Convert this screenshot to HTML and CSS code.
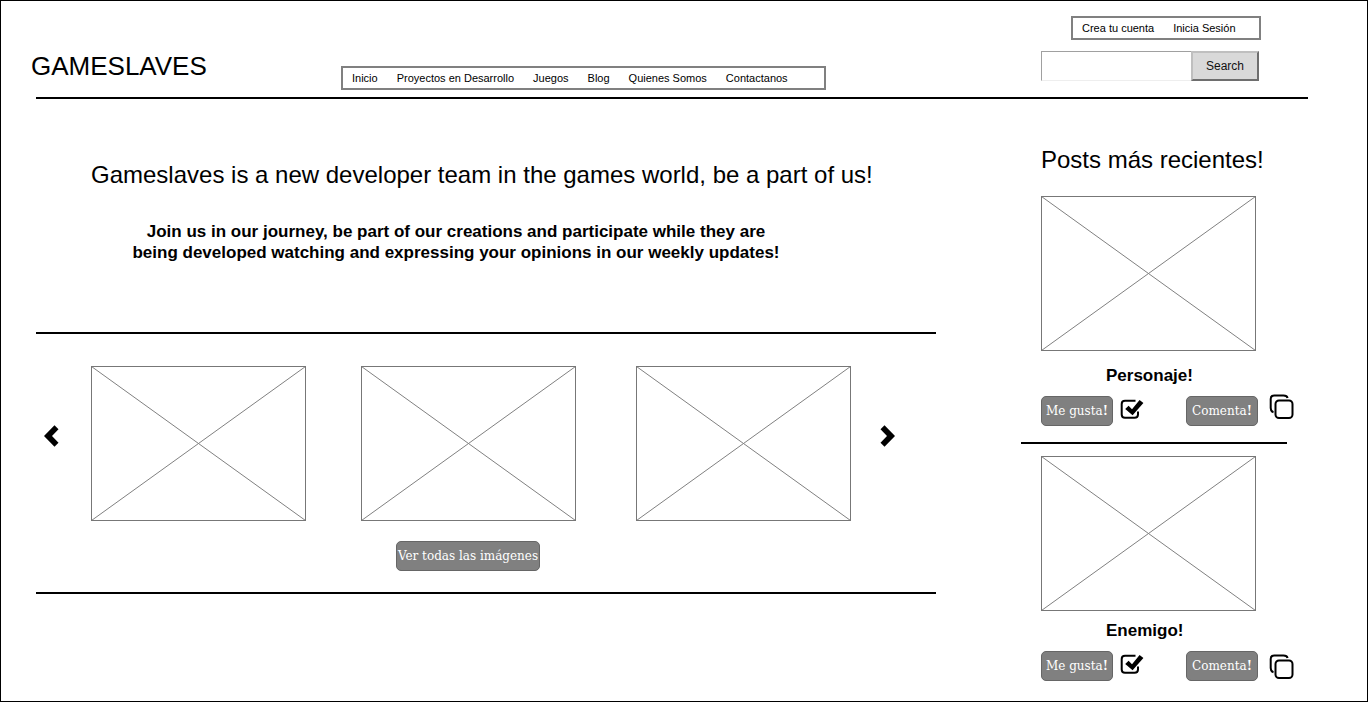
FILE: index.html
```html
<!DOCTYPE html>
<html lang="es">
<head>
<meta charset="utf-8">
<title>Gameslaves</title>
<meta name="viewport" content="width=device-width, initial-scale=1">
<link rel="stylesheet" href="styles.css">
</head>
<body>
<svg class="sprite" aria-hidden="true">
  <symbol id="placeholder" viewBox="0 0 215 155">
    <path d="M0.5 0.5L214.5 154.5M214.5 0.5L0.5 154.5" fill="none" stroke="#808080"/>
    <rect x="0.5" y="0.5" width="214" height="154" fill="none" stroke="#777"/>
  </symbol>
  <symbol id="check" viewBox="0 0 24 20">
    <path d="M15.500 1.700H5Q1.700 1.700 1.700 5V15.500Q1.700 18.700 5 18.700H14.500Q18 18.700 18 15.500V12.500" fill="none" stroke="#000" stroke-width="2"/>
    <path d="M5.200 10L8.600 6.800L12 10.300L19.600 1L23.400 4L12.600 16.200Z" fill="#000"/>
  </symbol>
  <symbol id="copy" viewBox="0 0 26 26">
    <path d="M4.500 18.200Q1.700 17.500 1.700 14V5Q1.700 1.500 5.200 1.500H14.500Q18 1.500 18.600 4" fill="none" stroke="#000" stroke-width="2"/>
    <rect x="6.500" y="6.500" width="17" height="17.500" rx="3.500" fill="#fff" stroke="#000" stroke-width="2"/>
  </symbol>
</svg>
<header class="header">
  <div class="logo">GAMESLAVES</div>
  <nav class="menu menu-main" aria-label="Principal">
    <a href="#">Inicio</a>
    <a href="#">Proyectos en Desarrollo</a>
    <a href="#">Juegos</a>
    <a href="#">Blog</a>
    <a href="#">Quienes Somos</a>
    <a href="#">Contactanos</a>
  </nav>
  <div class="tools">
    <nav class="menu menu-account" aria-label="Cuenta">
      <a href="#">Crea tu cuenta</a>
      <a href="#">Inicia Sesión</a>
    </nav>
    <form class="search">
      <input class="search-box" type="text" aria-label="Search">
      <button class="search-button" type="button">Search</button>
    </form>
  </div>
</header>
<hr class="rule rule-header">
<div class="columns">
  <main>
    <section class="intro">
      <h1>Gameslaves is a new developer team in the games world, be a part of us!</h1>
      <p>Join us in our journey, be part of our creations and participate while they are<br>being developed watching and expressing your opinions in our weekly updates!</p>
    </section>
    <hr class="rule">
    <section class="gallery">
      <div class="carousel">
        <button class="arrow" type="button" aria-label="Anterior"><svg width="15" height="22" viewBox="0 0 15 22"><path d="M0 11L10.500 0.300L14.500 4.300L8 11L14.500 17.700L10.500 21.700Z"/></svg></button>
        <svg class="picture"><use href="#placeholder"/></svg>
        <svg class="picture"><use href="#placeholder"/></svg>
        <svg class="picture"><use href="#placeholder"/></svg>
        <button class="arrow arrow-next" type="button" aria-label="Siguiente"><svg width="15" height="22" viewBox="0 0 15 22"><path d="M15 11L4.500 0.300L0.500 4.300L7 11L0.500 17.700L4.500 21.700Z"/></svg></button>
      </div>
      <button class="button button-all" type="button">Ver todas las imágenes</button>
    </section>
    <hr class="rule">
  </main>
  <aside class="recent">
    <h2>Posts más recientes!</h2>
    <article class="post">
      <svg class="picture"><use href="#placeholder"/></svg>
      <h3>Personaje!</h3>
      <div class="actions">
        <button class="button" type="button">Me gusta<b>!</b></button>
        <svg class="icon-check"><use href="#check"/></svg>
        <button class="button" type="button">Comenta<b>!</b></button>
        <svg class="icon-copy"><use href="#copy"/></svg>
      </div>
    </article>
    <hr class="rule rule-posts">
    <article class="post post-last">
      <svg class="picture"><use href="#placeholder"/></svg>
      <h3>Enemigo!</h3>
      <div class="actions">
        <button class="button" type="button">Me gusta<b>!</b></button>
        <svg class="icon-check"><use href="#check"/></svg>
        <button class="button" type="button">Comenta<b>!</b></button>
        <svg class="icon-copy"><use href="#copy"/></svg>
      </div>
    </article>
  </aside>
</div>
</body>
</html>
```
FILE: styles.css
```css
* {
  box-sizing: border-box;
}

body {
  margin: 0;
  min-height: 100vh;
  border: 1px solid #000;
  background: #fff;
  color: #000;
  font-family: "Liberation Sans", Arial, sans-serif;
}

h1, h2, h3, p {
  margin: 0;
}

button {
  padding: 0;
  cursor: pointer;
}

.sprite {
  display: none;
}

.rule {
  height: 2px;
  margin: 0;
  border: 0;
  background: #000;
}

.rule-header {
  margin: 0 59px 0 35px;
}

/* Header */

.header {
  display: grid;
  grid-template-columns: 310px minmax(0, 485px) 1fr;
  align-items: end;
  padding: 15px 106px 0 30px;
}

.logo {
  padding-bottom: 16px;
  font-size: 26px;
  line-height: 30px;
}

.header > .menu-main {
  margin-bottom: 7px;
}

.menu {
  display: flex;
  align-items: center;
  gap: 19px;
  height: 24px;
  padding: 0 9px;
  border: 2px solid #808080;
  font-size: 11px;
  white-space: nowrap;
}

.menu a {
  color: #000;
  text-decoration: none;
}

.tools {
  justify-self: end;
  display: grid;
  gap: 11px;
  padding-bottom: 16px;
}

.menu-account {
  width: 190px;
  margin-left: 30px;
}

.search {
  display: flex;
  height: 30px;
}

.search-box {
  width: 150px;
  border: 1px solid #a0a0a0;
  border-bottom-color: #eee;
  border-right: 0;
  background: #fff;
}

.search-button {
  width: 68px;
  border: 2px solid;
  border-color: #bfbfbf #6e6e6e #6e6e6e #bfbfbf;
  background: #d9d9d9;
  color: #111;
  font: 12px "Liberation Sans", Arial, sans-serif;
}

/* Page columns */

.columns {
  display: grid;
  grid-template-columns: minmax(0, 1fr) 346px;
  gap: 85px;
  padding-left: 35px;
}

.intro {
  padding: 62px 55px 69px;
}

.intro h1 {
  font-size: 24px;
  font-weight: 400;
  line-height: 28px;
}

.intro p {
  width: 730px;
  max-width: 100%;
  padding-top: 32px;
  font-size: 17px;
  font-weight: 700;
  line-height: 21px;
  text-align: center;
}

/* Gallery */

.gallery {
  padding: 32px 0 21px;
}

.carousel {
  display: grid;
  grid-template-columns: 55px minmax(0, 270fr) minmax(0, 275fr) minmax(0, 244fr) 56px;
  align-items: center;
}

.picture {
  display: block;
  width: 215px;
  max-width: 100%;
  height: 155px;
}

.arrow {
  display: flex;
  padding: 0 0 15px 8px;
  border: 0;
  background: none;
}

.arrow-next {
  padding-left: 0;
}

.button {
  width: 72px;
  height: 30px;
  border: 1px solid #666;
  border-radius: 5px;
  background: #808080;
  color: #fff;
  font: 12px "DejaVu Serif", serif;
  white-space: nowrap;
}

.button-all {
  display: block;
  width: 144px;
  margin: 20px 0 0 360px;
}

/* Recent posts */

.recent h2 {
  padding: 47px 0 22px 20px;
  font-size: 24px;
  font-weight: 400;
  line-height: 28px;
}

.post {
  padding: 0 0 16px 20px;
}

.post h3 {
  padding: 15px 0 10px 65px;
  font-size: 17px;
  line-height: 20px;
}

.rule-posts {
  width: 266px;
  margin-bottom: 12px;
}

.post-last h3 {
  padding-top: 10px;
}

.actions {
  display: grid;
  grid-template-columns: 79px 66px 83px 26px;
}

.icon-check {
  width: 24px;
  height: 20px;
  margin-top: 3px;
}

.icon-copy {
  width: 26px;
  height: 26px;
  margin-top: -2px;
}

.post-last .icon-copy {
  margin-top: 3px;
}
```
